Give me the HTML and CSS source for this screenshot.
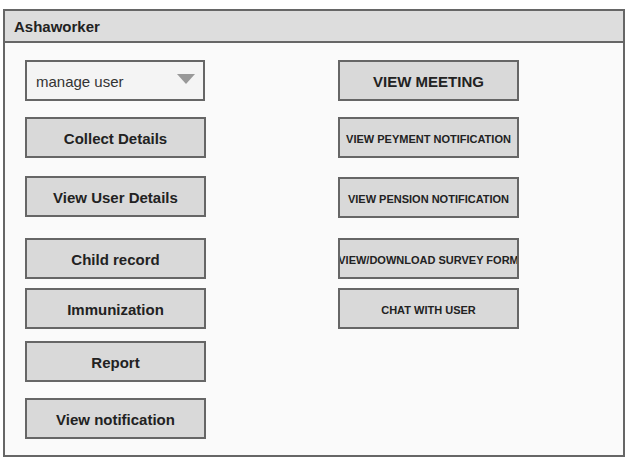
FILE: index.html
```html
<!DOCTYPE html>
<html lang="en">
<head>
    <meta charset="UTF-8">
    <meta name="viewport" content="width=device-width, initial-scale=1.0">
    <title>Ashaworker</title>
    <link rel="stylesheet" href="styles.css">
</head>
<body>
    <div class="window">
        <div class="window-title">Ashaworker</div>
        <div class="window-body">
            <div class="column">
                <div class="select">
                    <span>manage user</span>
                    <span class="caret"></span>
                </div>
                <button class="btn gap-16">Collect Details</button>
                <button class="btn gap-18">View User Details</button>
                <button class="btn gap-21">Child record</button>
                <button class="btn gap-9">Immunization</button>
                <button class="btn gap-12">Report</button>
                <button class="btn gap-16">View notification</button>
            </div>
            <div class="column">
                <button class="btn">VIEW MEETING</button>
                <button class="btn small gap-16">VIEW PEYMENT NOTIFICATION</button>
                <button class="btn small gap-19">VIEW PENSION NOTIFICATION</button>
                <button class="btn small gap-20">VIEW/DOWNLOAD SURVEY FORM</button>
                <button class="btn small gap-9">CHAT WITH USER</button>
            </div>
        </div>
    </div>
</body>
</html>
```

FILE: styles.css
```css
body {
    margin: 0;
    font-family: "Liberation Sans", Arial, sans-serif;
    background: #fff;
    color: #222;
}
.window {
    box-sizing: border-box;
    width: 622px;
    height: 448px;
    margin: 9px 0 0 3px;
    border: 2px solid #666;
    background: #fafafa;
}
.window-title {
    height: 30px;
    line-height: 32px;
    padding-left: 9px;
    background: #dddddd;
    border-bottom: 2px solid #666;
    font-size: 15px;
    font-weight: bold;
    color: #222;
}
.window-body {
    display: flex;
    gap: 132px;
    padding: 17px 0 0 20px;
}
.column {
    display: flex;
    flex-direction: column;
    width: 181px;
}
.select {
    box-sizing: border-box;
    display: flex;
    align-items: center;
    justify-content: space-between;
    width: 180px;
    height: 41px;
    padding: 2px 8px 0 9px;
    border: 2px solid #666;
    background: #f4f4f4;
    font-size: 15px;
    color: #333;
}
.caret {
    width: 0;
    height: 0;
    border-left: 9px solid transparent;
    border-right: 9px solid transparent;
    border-top: 10px solid #999;
    margin-top: -6px;
}
.btn {
    box-sizing: border-box;
    display: flex;
    align-items: center;
    justify-content: center;
    width: 181px;
    height: 41px;
    padding: 2px 0 0;
    border: 2px solid #666;
    background: #d9d9d9;
    font-family: "Liberation Sans", Arial, sans-serif;
    font-size: 15px;
    font-weight: bold;
    color: #222;
    white-space: nowrap;
    overflow: hidden;
}
.btn.small {
    font-size: 11px;
}
.gap-9 { margin-top: 9px; }
.gap-12 { margin-top: 12px; }
.gap-16 { margin-top: 16px; }
.gap-18 { margin-top: 18px; }
.gap-19 { margin-top: 19px; }
.gap-20 { margin-top: 20px; }
.gap-21 { margin-top: 21px; }
```
